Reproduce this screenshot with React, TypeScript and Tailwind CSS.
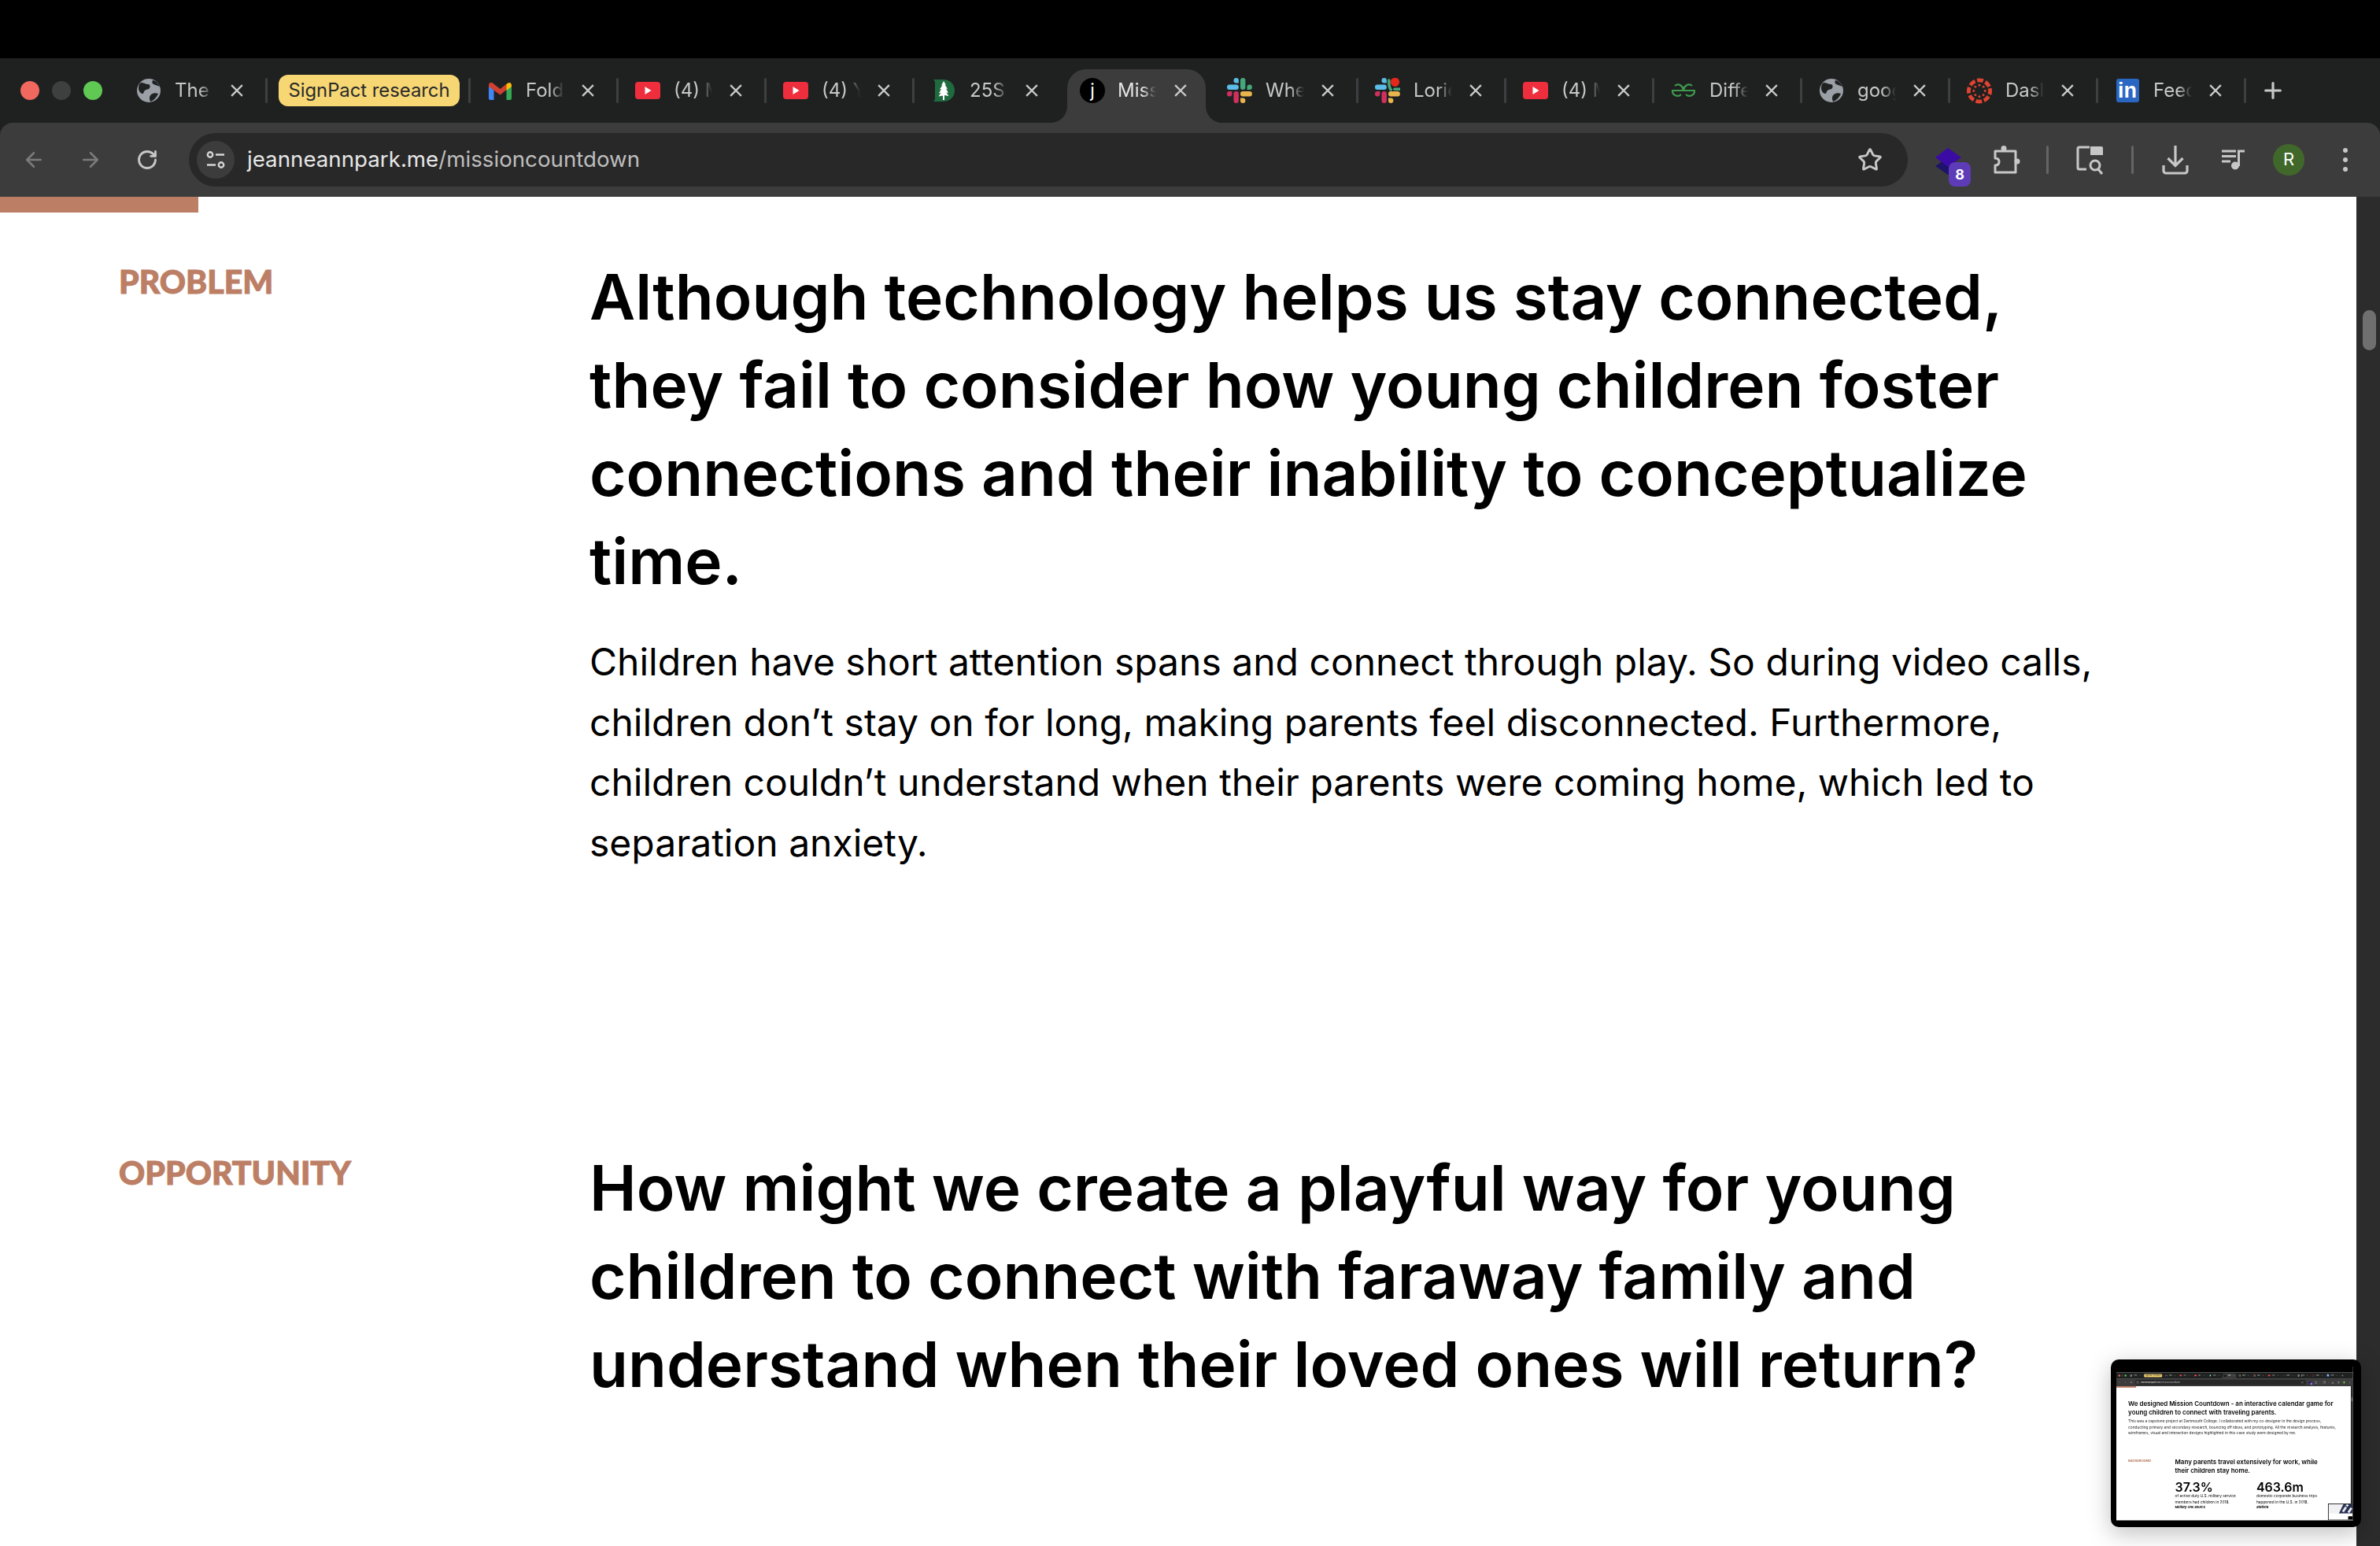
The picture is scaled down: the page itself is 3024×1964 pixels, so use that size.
import React from "react";
import { ArrowLeft, ArrowRight, RotateCw, Star, Plus } from "lucide-react";

const SLACK = [
  { d: "M19.712.133a5.381 5.381 0 0 0-5.376 5.387 5.381 5.381 0 0 0 5.376 5.386h5.376V5.52A5.381 5.381 0 0 0 19.712.133m0 14.365H5.376A5.381 5.381 0 0 0 0 19.884a5.381 5.381 0 0 0 5.376 5.387h14.336a5.381 5.381 0 0 0 5.376-5.387 5.381 5.381 0 0 0-5.376-5.386", f: "#5bbde8" },
  { d: "M34.048 54a5.381 5.381 0 0 0 5.376-5.387 5.381 5.381 0 0 0-5.376-5.386h-5.376v5.386A5.381 5.381 0 0 0 34.048 54m0-14.365h14.336a5.381 5.381 0 0 0 5.376-5.386 5.381 5.381 0 0 0-5.376-5.387H34.048a5.381 5.381 0 0 0-5.376 5.387 5.381 5.381 0 0 0 5.376 5.386", f: "#e8b64c" },
  { d: "M0 34.249a5.381 5.381 0 0 0 5.376 5.386 5.381 5.381 0 0 0 5.376-5.386v-5.387H5.376A5.381 5.381 0 0 0 0 34.249m14.336 0v14.364A5.381 5.381 0 0 0 19.712 54a5.381 5.381 0 0 0 5.376-5.387V34.25a5.381 5.381 0 0 0-5.376-5.387 5.381 5.381 0 0 0-5.376 5.387", f: "#d1305f" },
];

function Globe() {
  return (
    <svg width="30" height="32" viewBox="0 0 30 32">
      <circle cx="15" cy="16" r="15" fill="#9aa0a6" />
      <path d="M5 6c4 0 6 2 9 2s3 3 2 5-4 1-6 3-1 4-3 4-5-3-5-7 1-6 3-7zM20 3c-1 2-1 4 1 5s6 2 8 3c-1-3-5-8-9-8zM18 21c3-2 6-2 9-1-2 5-6 9-10 10-1-3-2-6 1-9z" fill="#202222" />
    </svg>
  );
}
function Gmail() {
  return (
    <svg width="29" height="23" viewBox="0 0 29 23">
      <path d="M0 4h6.500v19H2a2 2 0 0 1-2-2z" fill="#4285f4" />
      <path d="M22.500 4H29v17a2 2 0 0 1-2 2h-4.500z" fill="#34a853" />
      <path d="M0 4.500C0 1 3 0 5 1.500l9.500 7.500L24 1.500 22.500 10l-8 6.500L0 6z" fill="#d0402f" />
      <path d="M22.500 3l2-1.500C26 .3 29 1 29 4.500v1.500L22.500 11z" fill="#f8bc0a" />
    </svg>
  );
}
function YouTube() {
  return (
    <svg width="32" height="22" viewBox="0 0 32 22">
      <rect width="32" height="22" rx="4" fill="#ee2e3c" />
      <path d="M12.500 6l8 5-8 5z" fill="#fff" />
    </svg>
  );
}
function Dartmouth() {
  return (
    <svg width="27" height="28" viewBox="0 0 27 28">
      <path d="M0 0h12c9 0 15 6 15 14s-6 14-15 14H0l2-3V3z" fill="#1f6b3f" />
      <path d="M13 2l3 5-1.500-.5L18 12l-2-.5 3 5.500-2.500-.5 3 4.500-5.500-1V26h-2v-5.500l-5.500 1 3-4.500-2.500.5 3-5.500-2 .5 3.500-5.500-1.500.5z" fill="#fff" />
    </svg>
  );
}
function JIcon() {
  return (
    <div className="w-[32px] h-[32px] rounded-full bg-black flex items-center justify-center text-white text-[23px] leading-none font-['Inter',sans-serif]">
      j
    </div>
  );
}
function Slack({ dot }: { dot?: boolean }) {
  return (
    <svg width="32" height="32" viewBox="0 0 54 54">
      {SLACK.map((s) => (
        <path key={s.f} d={s.d} fill={s.f} />
      ))}
      {dot ? (
        <>
          <path d="M30 5c0 8 0 16 4 20M42 24h11" stroke="#45a87a" strokeWidth="6" fill="none" strokeLinecap="round" />
          <circle cx="43" cy="9" r="9.500" fill="#e5281b" />
        </>
      ) : (
        <path d="M53.760 19.884a5.381 5.381 0 0 0-5.376-5.386 5.381 5.381 0 0 0-5.376 5.386v5.387h5.376a5.381 5.381 0 0 0 5.376-5.387m-14.336 0V5.520A5.381 5.381 0 0 0 34.048.133a5.381 5.381 0 0 0-5.376 5.387v14.364a5.381 5.381 0 0 0 5.376 5.387 5.381 5.381 0 0 0 5.376-5.387" fill="#45a87a" />
      )}
    </svg>
  );
}
function Gfg() {
  return (
    <svg width="30" height="20" viewBox="0 0 30 20" fill="none" stroke="#3e9a4d" strokeWidth="2.200">
      <path d="M4 4a6.500 6.500 0 0 1 10.500 6H1a6.500 6.500 0 0 0 11 5" />
      <path d="M26 4a6.500 6.500 0 0 0-10.500 6H29a6.500 6.500 0 0 1-11 5" />
    </svg>
  );
}
function Canvas() {
  const n = [0, 1, 2, 3, 4, 5, 6, 7];
  return (
    <svg width="33" height="33" viewBox="0 0 33 33">
      <circle cx="16.500" cy="16.500" r="14" fill="none" stroke="#e0432f" strokeWidth="5" strokeDasharray="8 3" transform="rotate(-14 16.500 16.500)" />
      {n.map((i) => (
        <circle
          key={i}
          cx={16.5 + 7.5 * Math.cos((i * Math.PI) / 4)}
          cy={16.5 + 7.5 * Math.sin((i * Math.PI) / 4)}
          r="1.500"
          fill="#e0432f"
        />
      ))}
    </svg>
  );
}
function LinkedIn() {
  return (
    <div className="w-[29px] h-[30px] rounded-[3px] bg-[#2a67c2] flex items-end justify-center text-white text-[27px] leading-[30px] font-bold font-['Liberation_Sans',sans-serif]">
      in
    </div>
  );
}

function Close() {
  return (
    <svg width="16" height="16" viewBox="0 0 16 16" stroke="#c9c9c9" strokeWidth="2.400" strokeLinecap="square">
      <path d="M2 2l12 12M14 2L2 14" />
    </svg>
  );
}
function Sep() {
  return <div className="w-[3px] h-[32px] bg-[#3d4040] rounded-full" />;
}

function Tab({ icon, title, sep = true }: { icon: React.ReactNode; title: string; sep?: boolean }) {
  return (
    <div className="w-[188px] h-full flex items-center shrink-0">
      <div className="w-[32px] ml-[21px] flex justify-center">{icon}</div>
      <div className="w-[50px] ml-[17px] overflow-hidden whitespace-nowrap text-[24px] text-[#c7c7c7] [mask-image:linear-gradient(to_right,black_62%,transparent_98%)]">
        {title}
      </div>
      <div className="ml-[21px]">
        <Close />
      </div>
      {sep && <div className="ml-auto"><Sep /></div>}
    </div>
  );
}

function ActiveTab() {
  return (
    <div className="relative w-[176px] h-[68px] mx-[6px] self-end flex items-center shrink-0 rounded-t-[24px] bg-[#3c3c3c] pb-[14px]">
      <svg className="absolute bottom-0 left-[-22px]" width="22" height="22" viewBox="0 0 22 22">
        <path d="M22 0v22H0c12 0 22-8 22-22z" fill="#3c3c3c" />
      </svg>
      <svg className="absolute bottom-0 right-[-22px]" width="22" height="22" viewBox="0 0 22 22">
        <path d="M0 0v22h22C10 22 0 14 0 0z" fill="#3c3c3c" />
      </svg>
      <div className="w-[32px] ml-[16px] flex justify-center">
        <JIcon />
      </div>
      <div className="w-[50px] ml-[16px] overflow-hidden whitespace-nowrap text-[24px] text-[#e3e3e3] [mask-image:linear-gradient(to_right,black_62%,transparent_98%)]">
        Mission Countdown
      </div>
      <div className="ml-[22px]">
        <Close />
      </div>
    </div>
  );
}

function ExtIcon() {
  return (
    <div className="relative w-[40px] h-[40px]">
      <svg className="absolute left-0 top-[5px]" width="33" height="34" viewBox="0 0 33 34">
        <path d="M16 12L33 22 16 34 0 23z" fill="#1d1368" />
        <path d="M16 0l17 12-17 12L0 12z" fill="#3a0ca3" />
      </svg>
      <div className="absolute left-[17px] top-[23px] w-[28px] h-[31px] rounded-[8px] bg-[#5e3bb7] flex items-center justify-center text-white text-[18px] font-bold font-['Inter',sans-serif]">
        8
      </div>
    </div>
  );
}

function Toolbar() {
  return (
    <div className="h-[94px] bg-[#3c3c3c] rounded-t-[16px] flex items-center pb-[1px] shrink-0">
      <div className="ml-[7px] w-[72px] flex justify-center text-[#7b7b7b]">
        <ArrowLeft size={30} strokeWidth={2} />
      </div>
      <div className="w-[72px] flex justify-center text-[#7b7b7b]">
        <ArrowRight size={30} strokeWidth={2} />
      </div>
      <div className="w-[72px] flex justify-center text-[#c7c7c7]">
        <RotateCw size={28} strokeWidth={2.4} />
      </div>
      <div className="ml-[17px] w-[2184px] h-[68px] rounded-full bg-[#282828] flex items-center pl-[10px] pr-[32px]">
        <div className="w-[48px] h-[48px] rounded-full bg-[#3c3c3c] flex items-center justify-center">
          <svg width="26" height="26" viewBox="0 0 26 26" fill="none" stroke="#d5d5d5" strokeWidth="2.400">
            <circle cx="6" cy="6.500" r="3.200" />
            <path d="M13 6.500h11M2 19.500h11" />
            <circle cx="20" cy="19.500" r="3.200" />
          </svg>
        </div>
        <div className="ml-[16px] text-[27.700px] font-['Inter',sans-serif] whitespace-nowrap text-[#e6e6e6]">
          jeanneannpark.me<span className="text-[#bdbdbd]">/missioncountdown</span>
        </div>
        <div className="ml-auto text-[#c7c7c7]">
          <Star size={32} strokeWidth={2.200} />
        </div>
      </div>
      <div className="ml-[35px]">
        <ExtIcon />
      </div>
      <svg className="ml-[30px]" width="40" height="40" viewBox="0 0 40 40" fill="none" stroke="#c7c7c7" strokeWidth="3" strokeLinejoin="round">
        <path d="M6 9h26v27H6v-9c4 0 5-2.500 5-4.500S10 18 6 18z" />
        <circle cx="17" cy="5.500" r="3.500" fill="#c7c7c7" stroke="none" />
        <circle cx="34" cy="22" r="3.500" fill="#c7c7c7" stroke="none" />
      </svg>
      <div className="ml-[31px] w-[3px] h-[36px] bg-[#656565] rounded-full" />
      <svg className="ml-[32px]" width="40" height="40" viewBox="0 0 40 40" fill="none" stroke="#c7c7c7" strokeWidth="3">
        <path d="M16 32H7a2 2 0 0 1-2-2V6a2 2 0 0 1 2-2h13" />
        <path d="M21 3h14a2 2 0 0 1 2 2v9H21z" fill="#c7c7c7" stroke="none" />
        <circle cx="27" cy="27" r="6" />
        <path d="M31 32l5 6" />
      </svg>
      <div className="ml-[33px] w-[3px] h-[36px] bg-[#656565] rounded-full" />
      <svg className="ml-[33px]" width="40" height="40" viewBox="0 0 40 40" fill="none" stroke="#c7c7c7" strokeWidth="3.200">
        <path d="M20 2v26M10.500 18l9.500 9.500 9.500-9.500" />
        <path d="M5 27v7a3 3 0 0 0 3 3h24a3 3 0 0 0 3-3v-7" />
      </svg>
      <svg className="ml-[33px]" width="40" height="40" viewBox="0 0 40 40" fill="none" stroke="#c7c7c7" strokeWidth="2.800">
        <path d="M6 9h18M6 15.500h18M6 22h11" />
        <path d="M27.500 28V9H35" strokeWidth="3" />
        <circle cx="23" cy="27.500" r="5" fill="#c7c7c7" stroke="none" />
      </svg>
      <div className="ml-[31px] w-[40px] h-[40px] rounded-full bg-[#41682b] flex items-center justify-center text-[22px] text-white font-['Inter',sans-serif]">
        R
      </div>
      <div className="ml-[49px] w-[8px] flex flex-col gap-[6px]">
        <div className="w-[6px] h-[6px] rounded-full bg-[#c7c7c7]" />
        <div className="w-[6px] h-[6px] rounded-full bg-[#c7c7c7]" />
        <div className="w-[6px] h-[6px] rounded-full bg-[#c7c7c7]" />
      </div>
    </div>
  );
}

function Browser({ children, pip }: { children: React.ReactNode; pip: React.ReactNode }) {
  return (
    <div className="relative w-[3024px] h-[1964px] overflow-hidden bg-white flex flex-col font-['Inter',sans-serif]">
      <div className="h-[74px] bg-black shrink-0" />
      <div className="h-[82px] bg-[#1f2121] flex flex-col shrink-0">
        <div className="h-full flex items-center">
          <div className="w-[152px] flex shrink-0">
            <div className="ml-[26px] w-[24px] h-[24px] rounded-full bg-[#f1685e]" />
            <div className="ml-[16px] w-[24px] h-[24px] rounded-full bg-[#3e3f3f]" />
            <div className="ml-[16px] w-[24px] h-[24px] rounded-full bg-[#5fc954]" />
          </div>
          <Tab icon={<Globe />} title="The Best" sep />
          <div className="w-[258px] h-full flex items-center shrink-0 pl-[14px]">
            <div className="w-[230px] h-[40px] rounded-[12px] bg-[#f7d774] flex items-center justify-center text-[23.800px] text-[#2a2a2a] whitespace-nowrap">
              SignPact research
            </div>
            <div className="ml-auto"><Sep /></div>
          </div>
          <Tab icon={<Gmail />} title="Folder" />
          <Tab icon={<YouTube />} title="(4) Music" />
          <Tab icon={<YouTube />} title="(4) YouTube" />
          <Tab icon={<Dartmouth />} title="25S Design" sep={false} />
          <ActiveTab />
          <Tab icon={<Slack />} title="When" />
          <Tab icon={<Slack dot />} title="Lorie" />
          <Tab icon={<YouTube />} title="(4) Music" />
          <Tab icon={<Gfg />} title="Difference" />
          <Tab icon={<Globe />} title="google" />
          <Tab icon={<Canvas />} title="Dashboard" />
          <Tab icon={<LinkedIn />} title="Feed" />
          <div className="ml-[18px] text-[#c7c7c7]">
            <Plus size={32} strokeWidth={2.400} />
          </div>
        </div>
      </div>
      <div className="bg-[#1f2121] shrink-0">
        <Toolbar />
      </div>
      <div className="flex-1 flex min-h-0">
        <div className="flex-1 relative min-w-0">{children}</div>
        <div className="w-[30px] bg-[#2c2c2c] shrink-0">
          <div className="ml-[8px] mt-[144px] w-[17px] h-[51px] rounded-full bg-[#6f6f6f]" />
        </div>
      </div>
      {pip}
    </div>
  );
}

const label = "text-[41px] leading-[48px] font-black font-['Lato',sans-serif] text-[#bc7f66] mt-[13px] -ml-[1px] [-webkit-text-stroke:1px_#bc7f66]";
const heading = "text-[80px] leading-[112px] font-semibold text-black whitespace-nowrap";
const para = "text-[48px] leading-[76.500px] text-black mt-[34px] whitespace-nowrap";

function MainPage() {
  return (
    <div className="h-full overflow-hidden">
      <div className="w-[252px] h-[20px] bg-[#bc7f66]" />
      <div className="pl-[152px] pt-[51px]">
        <div className="grid grid-cols-[597px_1fr]">
          <div className={label}>PROBLEM</div>
          <div>
            <h1 className={heading}>
              Although technology helps us stay connected,
              <br />
              they fail to consider how young children foster
              <br />
              connections and their inability to conceptualize
              <br />
              time.
            </h1>
            <p className={para}>
              Children have short attention spans and connect through play. So during video calls,
              <br />
              children don’t stay on for long, making parents feel disconnected. Furthermore,
              <br />
              children couldn’t understand when their parents were coming home, which led to
              <br />
              separation anxiety.
            </p>
          </div>
        </div>
        <div className="grid grid-cols-[597px_1fr] mt-[344px]">
          <div className={label}>OPPORTUNITY</div>
          <h1 className={heading}>
            How might we create a playful way for young
            <br />
            children to connect with faraway family and
            <br />
            understand when their loved ones will return?
          </h1>
        </div>
      </div>
    </div>
  );
}

function MiniPage() {
  return (
    <div className="h-full overflow-hidden">
      <div className="w-[252px] h-[20px] bg-[#bc7f66]" />
      <div className="pl-[152px] pt-[146px]">
        <h1 className={heading}>
          We designed Mission Countdown - an interactive calendar game for
          <br />
          young children to connect with traveling parents.
        </h1>
        <p className="text-[48px] leading-[76.500px] text-[#222] mt-[20px] whitespace-nowrap">
          This was a capstone project at Dartmouth College. I collaborated with my co-designer in the design process,
          <br />
          conducting primary and secondary research, bouncing off ideas, and prototyping. All the research analysis, features,
          <br />
          wireframes, visual and interaction designs highlighted in this case study were designed by me.
        </p>
        <div className="grid grid-cols-[597px_1fr] mt-[270px]">
          <div className={label}>BACKGROUND</div>
          <div>
            <h1 className={heading}>
              Many parents travel extensively for work, while
              <br />
              their children stay home.
            </h1>
            <div className="flex mt-[80px]">
              <div className="w-[1040px]">
                <div className="text-[160px] leading-[150px] font-semibold">37.3%</div>
                <div className="text-[48px] leading-[76px]">
                  of active duty U.S. military service
                  <br />
                  members had children in 2018.
                </div>
                <div className="text-[40px] font-bold italic">Military One Source</div>
              </div>
              <div>
                <div className="text-[160px] leading-[150px] font-semibold">463.6m</div>
                <div className="text-[48px] leading-[76px]">
                  domestic corporate business trips
                  <br />
                  happened in the U.S. in 2018.
                </div>
                <div className="text-[40px] font-bold italic">Statista</div>
              </div>
            </div>
          </div>
        </div>
      </div>
    </div>
  );
}

function InnerPip() {
  return (
    <div className="absolute left-[2703px] top-[1749px] w-[321px] h-[215px] bg-white border-[8px] border-black overflow-hidden">
      <svg width="305" height="120" viewBox="0 0 305 120" className="block">
        <rect width="305" height="120" fill="#f1f1f3" />
        <path d="M130 120L190 0h115v120z" fill="#27304f" />
        <path d="M170 90l40-60 24 16-40 60zM240 100l40-60 24 16-40 60zM215 20l20-20 24 14-20 20z" fill="#e8e8ee" />
      </svg>
      <div className="absolute right-0 bottom-0 w-[56px] h-[44px] bg-black" />
    </div>
  );
}

function Pip() {
  return (
    <div className="absolute left-[2682px] top-[1727px] w-[318px] h-[213px] rounded-[10px] bg-black shadow-[0_8px_30px_rgba(0,0,0,0.25)] pl-[7px] pt-[9px]">
      <div className="w-[301px] h-[196px] overflow-hidden blur-[0.4px]">
        <div className="origin-top-left scale-[0.0995]">
          <Browser pip={<InnerPip />}>
            <MiniPage />
          </Browser>
        </div>
      </div>
    </div>
  );
}

export default function App() {
  return (
    <Browser pip={<Pip />}>
      <MainPage />
    </Browser>
  );
}
